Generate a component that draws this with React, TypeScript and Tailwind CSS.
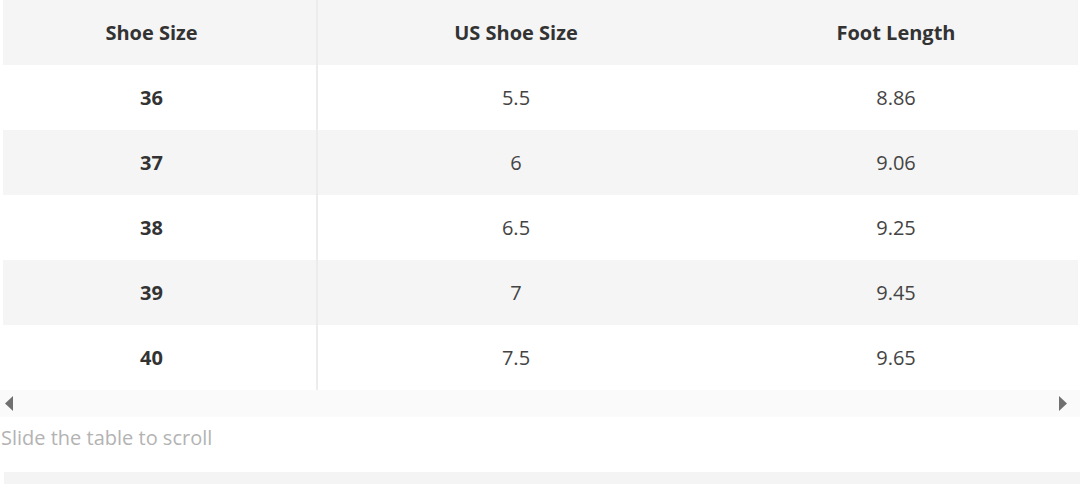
import React from "react";

const rows = [
  ["36", "5.5", "8.86"],
  ["37", "6", "9.06"],
  ["38", "6.5", "9.25"],
  ["39", "7", "9.45"],
  ["40", "7.5", "9.65"],
];

export default function App() {
  return (
    <div className="w-[1080px] h-[484px] bg-white overflow-hidden" style={{ fontFamily: '"Open Sans", "Noto Sans", sans-serif' }}>
      <div className="pl-[3px] pr-[2px]">
        <div className="grid grid-cols-[315px_396px_1fr] h-[65px] bg-[#f5f5f5] text-[#333] text-[20px] font-bold">
          <div className="flex items-center justify-center pr-[16px] border-r-2 border-[#ececec]">Shoe Size</div>
          <div className="flex items-center justify-center">US Shoe Size</div>
          <div className="flex items-center justify-center">Foot Length</div>
        </div>
        {rows.map((r, i) => (
          <div
            key={r[0]}
            className={`grid grid-cols-[315px_396px_1fr] h-[65px] text-[20px] text-[#444] ${i % 2 === 1 ? "bg-[#f5f5f5]" : "bg-white"}`}
          >
            <div className="flex items-center justify-center pr-[16px] font-bold text-[#333] border-r-2 border-[#ececec]">{r[0]}</div>
            <div className="flex items-center justify-center">{r[1]}</div>
            <div className="flex items-center justify-center">{r[2]}</div>
          </div>
        ))}
      </div>
      <div className="h-[27px] bg-[#fafafa] flex items-center justify-between pl-[4px] pr-[12px]">
        <svg width="9" height="15" viewBox="0 0 9 15"><polygon points="9,0 9,15 1,7.5" fill="#707070" /></svg>
        <svg width="9" height="15" viewBox="0 0 9 15"><polygon points="0,0 0,15 8,7.5" fill="#707070" /></svg>
      </div>
      <div className="h-[55px] flex items-center pl-[1px] pb-[14px] text-[20px] text-[#b3b3b3]">Slide the table to scroll</div>
      <div className="ml-[4px] h-[12px] bg-[#f4f4f4]" />
    </div>
  );
}
